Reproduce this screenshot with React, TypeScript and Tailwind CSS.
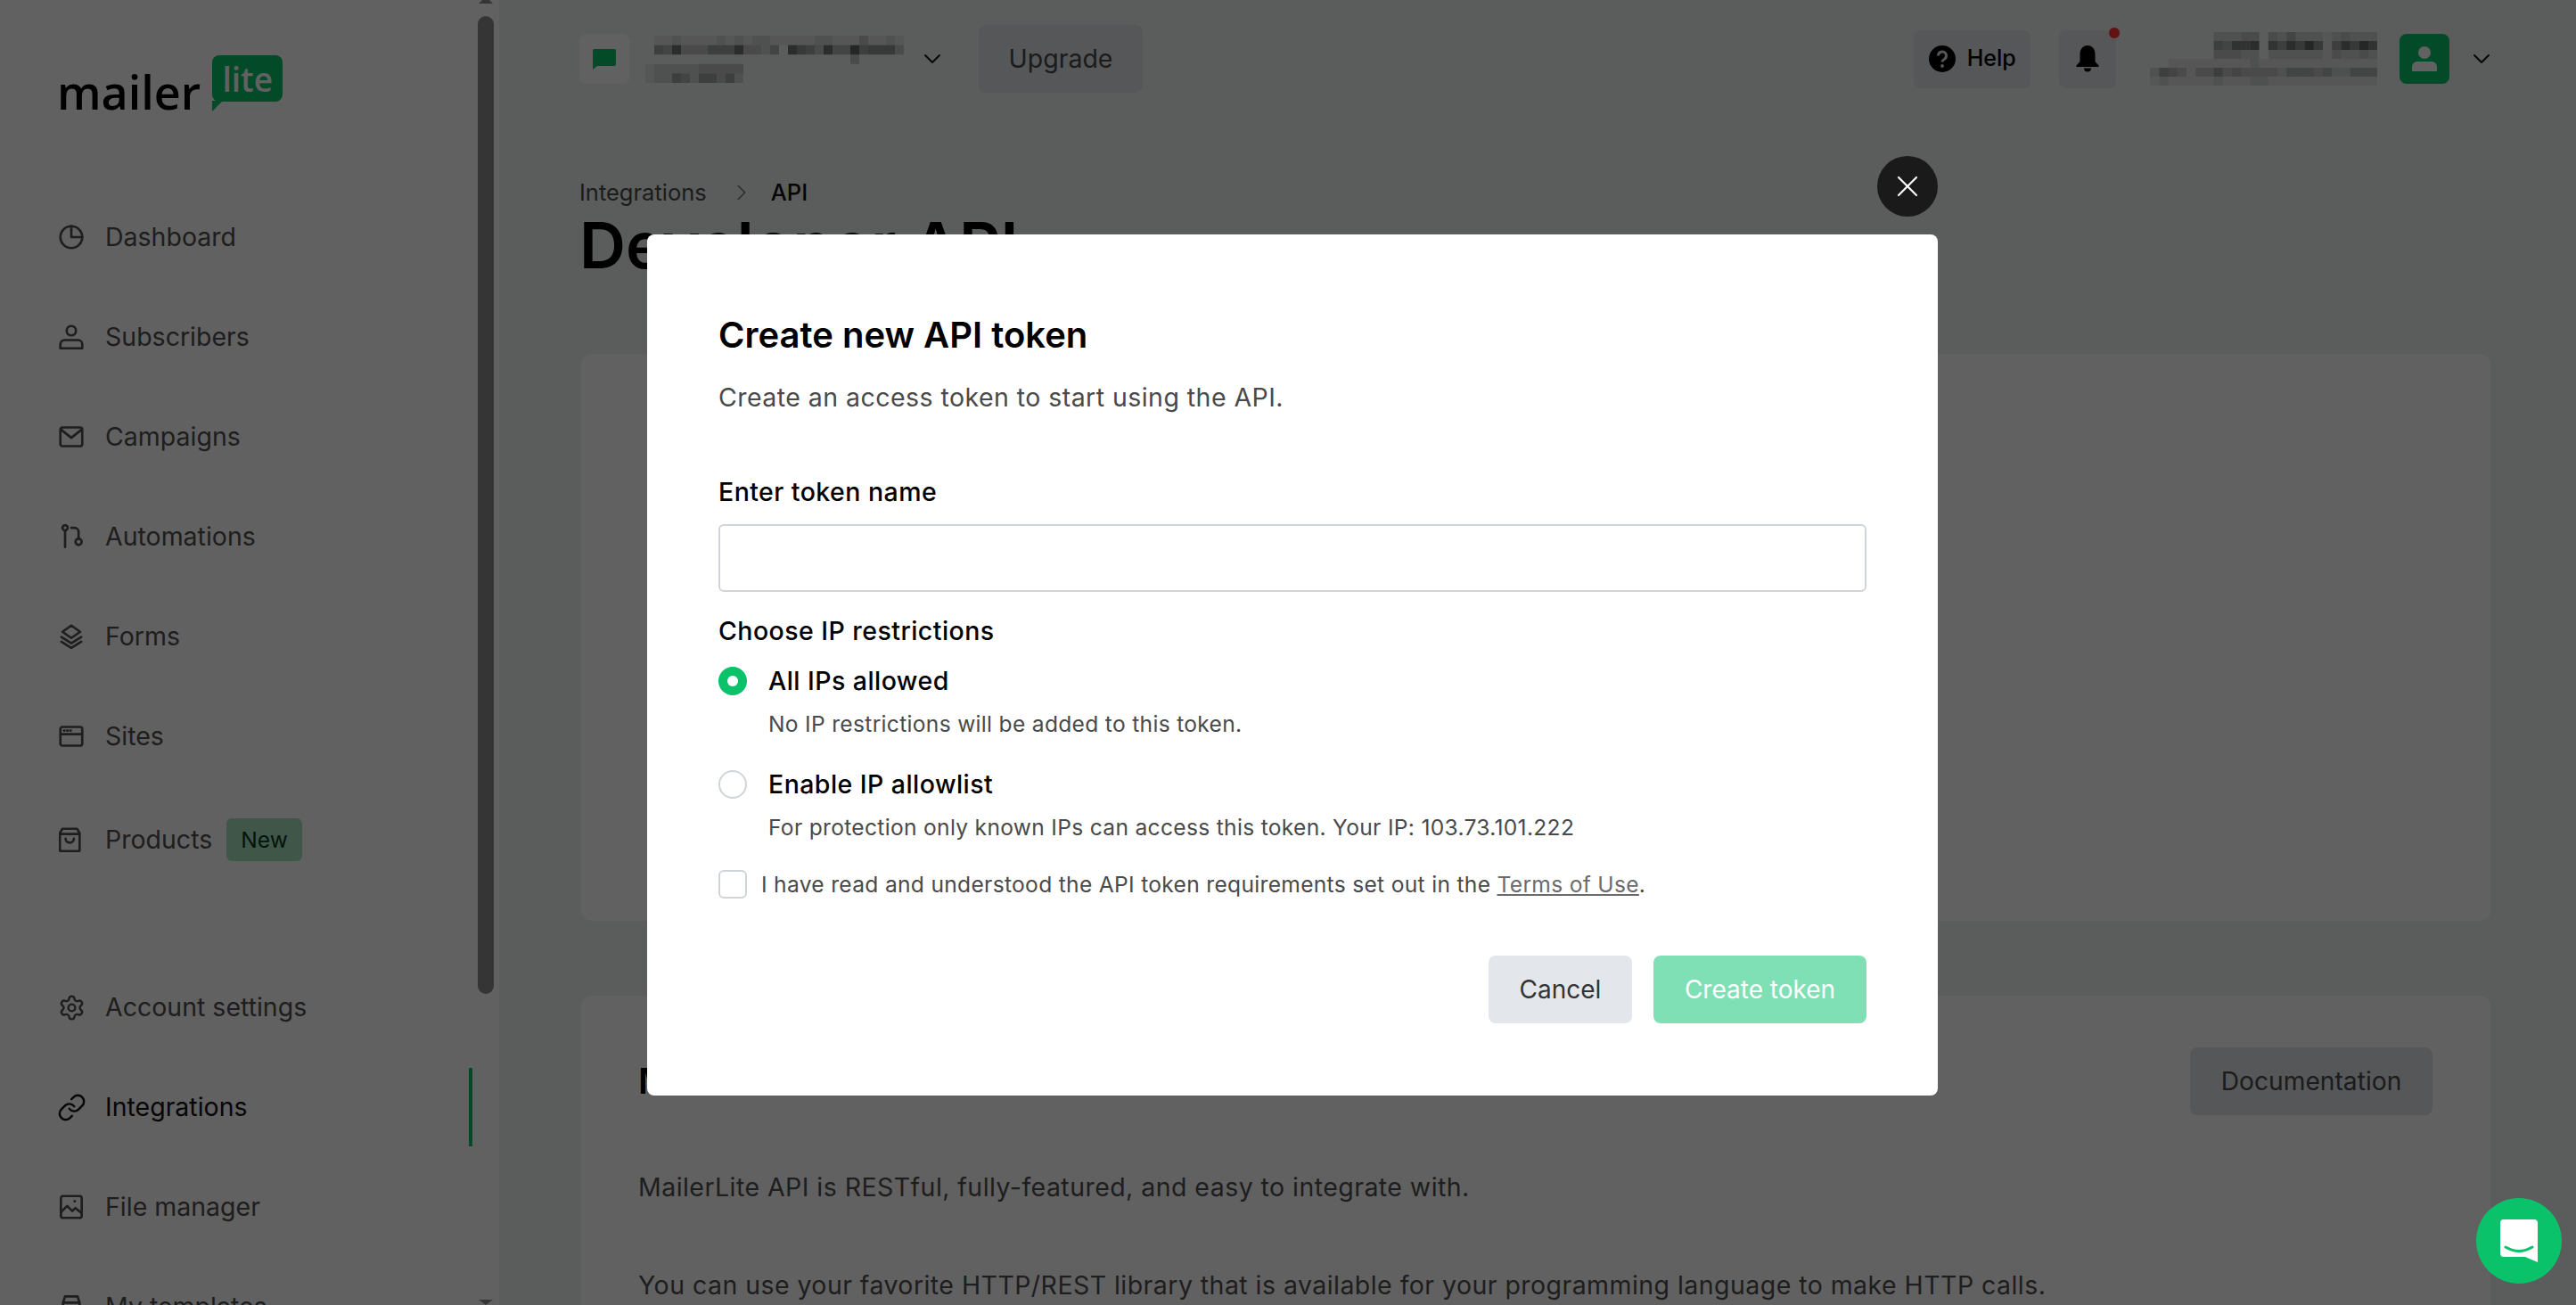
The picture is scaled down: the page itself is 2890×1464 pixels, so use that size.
import type { ReactNode } from "react"
import { ChevronDown, ChevronRight, Link, Settings, X } from "lucide-react"

// blurred account details in the header, one digit per cell (0 = empty, 9 = darkest)
function Mosaic({ rows, cellW = 10, cellH = 10 }: { rows: string[]; cellW?: number; cellH?: number }) {
  const cols = Math.max(...rows.map((r) => r.length))
  return (
    <svg width={cols * cellW} height={rows.length * cellH} className="block shrink-0">
      {rows.map((row, y) =>
        row.split("").map((d, x) =>
          d === "0" ? null : (
            <rect key={`${x}-${y}`} x={x * cellW} y={y * cellH} width={cellW} height={cellH} fill="#000" opacity={Number(d) * 0.065} />
          )
        )
      )}
    </svg>
  )
}

function Icon({ children }: { children: ReactNode }) {
  return (
    <svg viewBox="0 0 24 24" width="28" height="28" fill="none" stroke="currentColor" strokeWidth="2.3" strokeLinecap="round" strokeLinejoin="round" className="shrink-0">
      {children}
    </svg>
  )
}

const topNav = [
  { label: "Dashboard", icon: <Icon><circle cx="12" cy="12" r="10.5" /><path d="M12 1.5V12h10.5" /></Icon> },
  { label: "Subscribers", icon: <Icon><circle cx="12" cy="6" r="4.5" /><path d="M1.500 23v-4a4 4 0 0 1 4-4h13a4 4 0 0 1 4 4v4z" /></Icon> },
  { label: "Campaigns", icon: <Icon><rect x="1.500" y="3" width="21" height="18" rx="2" /><path d="M2 5l10 8 10-8" /></Icon> },
  { label: "Automations", icon: <Icon><circle cx="6" cy="3.500" r="2.500" /><path d="M6 6v16M12 3.500h3a4 4 0 0 1 4 4V14" /><circle cx="19" cy="17" r="3" /></Icon> },
  { label: "Forms", icon: <Icon><path d="M12 1.500l8.500 6-8.500 6-8.500-6zM2.500 12.500l9.500 6 9.500-6M2.500 17l9.500 6 9.500-6" /></Icon> },
  { label: "Sites", icon: <Icon><rect x="1.500" y="3" width="21" height="18" rx="2" /><path d="M2 10h20M5 6.500h.5M8 6.500h.5M11 6.500h.5" /></Icon> },
]

const bottomNav = [
  { label: "Account settings", icon: <Settings size={31} strokeWidth={1.9} className="mx-[-1.5px] shrink-0" /> },
  { label: "Integrations", active: true, icon: <Link size={33} strokeWidth={1.8} className="mx-[-2.5px] shrink-0" /> },
  { label: "File manager", icon: <Icon><rect x="2" y="1.500" width="20" height="21" rx="2" /><path d="M2 17l6-6 5 5 3-3 6 5M15 6.500h.5" /></Icon> },
  { label: "My templates", icon: <Icon><path d="M4 22V8l2-6h12l2 6v14M4 8h16" /></Icon> },
]

function NavRow({ label, icon, active }: { label: string; icon: ReactNode; active?: boolean }) {
  return (
    <div className={`flex h-[88px] shrink-0 items-center gap-[24px] pl-[66px] text-[28.5px] ${active ? "border-r-[4px] border-[#09c269] text-[#111111]" : "text-[#4f4f4f]"}`}>
      {icon}
      <span>{label}</span>
    </div>
  )
}

function RadioRow({ label, hint, checked }: { label: string; hint: string; checked?: boolean }) {
  return (
    <div>
      <div className="flex h-[32px] items-center gap-[24px]">
        {checked ? (
          <span className="flex h-[32px] w-[32px] items-center justify-center rounded-full bg-[#09c269]">
            <span className="h-[12px] w-[12px] rounded-full bg-white" />
          </span>
        ) : (
          <span className="h-[32px] w-[32px] rounded-full border-2 border-[#ced4da] bg-white" />
        )}
        <span className="text-[28.5px] font-medium tracking-[0.45px] text-black">{label}</span>
      </div>
      <p className="mt-[16px] pl-[56px] text-[24.6px] leading-[32px] tracking-[0.3px] text-[#4a4a4a]">{hint}</p>
    </div>
  )
}

export default function App() {
  return (
    <div className="relative flex h-screen overflow-hidden bg-[#eff2f1] font-['Inter',sans-serif]">
      {/* sidebar */}
      <aside className="flex w-[560px] shrink-0 bg-white">
        <div className="flex w-[536px] shrink-0 flex-col overflow-hidden pr-[6px]">
          <div className="flex h-[222px] shrink-0 items-start pl-[64px] pt-[62px]">
            <div className="flex items-start">
              <span className="mt-[8px] font-['Open_Sans',sans-serif] text-[52px] font-semibold leading-[66px] text-black">mailer</span>
              <div className="relative ml-[13px] flex h-[52px] w-[79px] items-center justify-center rounded-[8px] bg-[#09c269]">
                <span className="font-['Open_Sans',sans-serif] text-[37px] font-semibold leading-none text-white">lite</span>
                <svg width="12" height="12" viewBox="0 0 12 12" className="absolute left-0 top-[51px]">
                  <path d="M0 0h12L0 12z" fill="#09c269" />
                </svg>
              </div>
            </div>
          </div>
          <nav className="flex flex-col gap-[24px]">
            {topNav.map((n) => (
              <NavRow key={n.label} label={n.label} icon={n.icon} />
            ))}
          </nav>
          <div className="mt-[24px] flex h-[96px] shrink-0 items-center gap-[24px] pl-[66px] text-[28.5px] text-[#4f4f4f]">
            <Icon><path d="M1 5.500L3.500 1.500h14l2.500 4V22a1 1 0 0 1-1 1H2a1 1 0 0 1-1-1zM1 6.500h19M6.500 11a4 4 0 0 0 8 0" /></Icon>
            <span>Products</span>
            <span className="ml-[-8px] rounded-[6px] bg-[#a5e1c0] px-[16px] py-[8px] text-[24.6px] leading-[32px] text-[#06371f]">New</span>
          </div>
          <nav className="mt-[96px] flex flex-col gap-[24px]">
            {bottomNav.map((n) => (
              <NavRow key={n.label} label={n.label} icon={n.icon} active={n.active} />
            ))}
          </nav>
        </div>
        <div className="flex w-[18px] shrink-0 flex-col items-center">
          <svg width="18" height="4" viewBox="0 0 18 4" className="shrink-0"><path d="M1 4l4-4h8l4 4z" fill="#8c8c8c" /></svg>
          <div className="mt-[14px] h-[1097px] w-[18px] shrink-0 rounded-full bg-[#8c8c8c]" />
          <div className="flex-1" />
          <svg width="18" height="6" viewBox="0 0 18 6" className="shrink-0"><path d="M1 0h16l-8 6z" fill="#8c8c8c" /></svg>
        </div>
      </aside>

      {/* page behind the dialog */}
      <main className="min-w-0 flex-1 overflow-hidden">
        <header className="flex h-[132px] items-center pl-[90px] pr-[90px]">
          <div className="flex h-[56px] w-[56px] items-center justify-center rounded-[8px] bg-white">
            <svg width="28" height="24" viewBox="0 0 28 24"><path d="M3 1h22a2 2 0 0 1 2 2v15a2 2 0 0 1-2 2H6l-5 4V3a2 2 0 0 1 2-2z" fill="#09c269" /></svg>
          </div>
          <div className="ml-[18px]">
            <Mosaic
              cellH={10.6}
              rows={[
                "01121111212122111112211131121",
                "05483335558332408653844956663",
                "00000000000000000000000300000",
                "12222233333",
                "12254255352",
              ]}
            />
          </div>
          <ChevronDown size={32} strokeWidth={1.5} className="ml-[16px] shrink-0 text-[#111111]" />
          <button className="ml-[36px] h-[76px] w-[184px] rounded-[8px] bg-[#e2e4e8] text-[28.5px] text-[#4a4a4a]">Upgrade</button>
          <div className="flex-1" />
          <button className="flex h-[65px] items-center gap-[13px] rounded-[8px] bg-[#e2e4e8] pl-[17px] pr-[16px] text-[25px] font-medium text-black">
            <svg width="30" height="30" viewBox="0 0 30 30">
              <circle cx="15" cy="15" r="15" fill="#000" />
              <path d="M10.500 11.500a4.500 4.500 0 1 1 7 3.700c-1.600 1-2.500 1.800-2.500 3.300" fill="none" stroke="#e2e4e8" strokeWidth="3" />
              <circle cx="15" cy="23" r="1.900" fill="#e2e4e8" />
            </svg>
            Help
          </button>
          <div className="relative ml-[32px] flex h-[65px] w-[64px] items-center justify-center rounded-[8px] bg-[#e2e4e8]">
            <svg width="26" height="30" viewBox="0 0 26 30">
              <path d="M13 0a8.500 8.500 0 0 1 8.500 8.500V18l4 4.500v1.500H.5v-1.500l4-4.500V8.500A8.500 8.500 0 0 1 13 0z" fill="#000" />
              <path d="M9 25.500h8a4 4 0 0 1-8 0z" fill="#000" />
            </svg>
            <span className="absolute right-[-5px] top-[-4px] h-[14px] w-[14px] rounded-full border border-[#f3f4f6] bg-[#ff3030]" />
          </div>
          <div className="ml-[28px]">
            <Mosaic
              cellW={10.2}
              rows={[
                "00000000222330324222123222",
                "00000000547780758696158697",
                "00000000333220222222132232",
                "00011111111121111111111111",
                "02543133534333324443422444",
                "01211111211122111111111111",
              ]}
            />
          </div>
          <div className="ml-[25px] flex h-[56px] w-[56px] items-center justify-center rounded-[8px] bg-[#09c269]">
            <svg width="28" height="28" viewBox="0 0 28 28">
              <circle cx="14" cy="7" r="7" fill="#fff" />
              <path d="M0 28v-5a6 6 0 0 1 6-6h16a6 6 0 0 1 6 6v5z" fill="#fff" />
            </svg>
          </div>
          <ChevronDown size={32} strokeWidth={1.5} className="ml-[20px] shrink-0 text-[#111111]" />
        </header>

        <div className="pl-[90px] pr-[96px]">
          <div className="mt-[66px] flex h-[36px] items-center text-[25.5px] text-[#4a4a4a]">
            <span>Integrations</span>
            <ChevronRight size={30} strokeWidth={1.3} className="ml-[24px] text-[#6b7280]" />
            <span className="ml-[18px] font-medium text-[#111111]">API</span>
          </div>
          <h1 className="mt-[5px] text-[72px] font-semibold leading-[72px] text-black">Developer API</h1>
          <section className="ml-[2px] mt-[86px] h-[636px] rounded-[12px] bg-white" />
          <section className="ml-[2px] mt-[84px] h-[500px] rounded-[12px] bg-white px-[64px] pt-[58px]">
            <div className="flex items-center justify-between">
              <h2 className="text-[40px] font-semibold text-black">MailerLite API</h2>
              <button className="mr-[1px] h-[76px] w-[272px] rounded-[8px] bg-[#e2e4e8] text-[28.2px] text-[#4a4a4a]">Documentation</button>
            </div>
            <p className="mt-[61px] text-[28.5px] leading-[40px] tracking-[0.45px] text-[#4f4f4f]">MailerLite API is RESTful, fully-featured, and easy to integrate with.</p>
            <p className="mt-[70px] text-[28.5px] leading-[40px] tracking-[0.45px] text-[#4f4f4f]">You can use your favorite HTTP/REST library that is available for your programming language to make HTTP calls.</p>
          </section>
        </div>
      </main>

      {/* overlay + dialog */}
      <div className="absolute inset-0 flex justify-center bg-[rgba(0,0,0,0.62)] pl-[10px] pt-[263px]">
        <div className="relative h-[966px] w-[1448px] rounded-[8px] bg-white px-[80px] pt-[93px]">
          <button className="absolute right-0 top-[-88px] flex h-[68px] w-[68px] items-center justify-center rounded-full bg-[#1a1a1a] text-white">
            <X size={40} strokeWidth={1.3} />
          </button>
          <h2 className="text-[40px] font-semibold leading-[40px] text-black">Create new API token</h2>
          <p className="mt-[30px] text-[28.5px] leading-[40px] tracking-[0.45px] text-[#4a4a4a]">Create an access token to start using the API.</p>
          <label className="mt-[66px] block text-[28.5px] font-medium leading-[40px] tracking-[0.45px] text-black">Enter token name</label>
          <input className="mt-[16px] block h-[76px] w-full rounded-[6px] border-2 border-[#ced4da] bg-white" />
          <p className="mt-[24px] text-[28.5px] font-medium leading-[40px] tracking-[0.45px] text-black">Choose IP restrictions</p>
          <div className="mt-[20px]">
            <RadioRow checked label="All IPs allowed" hint="No IP restrictions will be added to this token." />
          </div>
          <div className="mt-[36px]">
            <RadioRow label="Enable IP allowlist" hint="For protection only known IPs can access this token. Your IP: 103.73.101.222" />
          </div>
          <div className="mt-[32px] flex h-[32px] items-center gap-[16px]">
            <span className="h-[32px] w-[32px] shrink-0 rounded-[6px] border-2 border-[#ced4da] bg-white" />
            <span className="text-[24.6px] tracking-[0.3px] text-[#4a4a4a]">
              I have read and understood the API token requirements set out in the <a className="text-[#6b6b6b] underline">Terms of Use</a>.
            </span>
          </div>
          <div className="mt-[64px] flex justify-end gap-[24px]">
            <button className="h-[76px] w-[161px] rounded-[8px] bg-[#e3e6ea] text-[28px] text-[#333333]">Cancel</button>
            <button className="h-[76px] w-[239px] rounded-[8px] bg-[#80e0b5] text-[28px] text-white">Create token</button>
          </div>
        </div>
      </div>

      {/* chat launcher */}
      <button className="absolute bottom-[24px] right-[16px] flex h-[96px] w-[96px] items-center justify-center rounded-full bg-[#09c269]">
        <svg width="42" height="48" viewBox="0 0 42 48">
          <path d="M4 0h34a4 4 0 0 1 4 4v44l-14-6H4a4 4 0 0 1-4-4V4a4 4 0 0 1 4-4z" fill="#fff" />
          <path d="M6 31q15 9 30 0" fill="none" stroke="#09c269" strokeWidth="3" strokeLinecap="round" />
        </svg>
      </button>
    </div>
  )
}
